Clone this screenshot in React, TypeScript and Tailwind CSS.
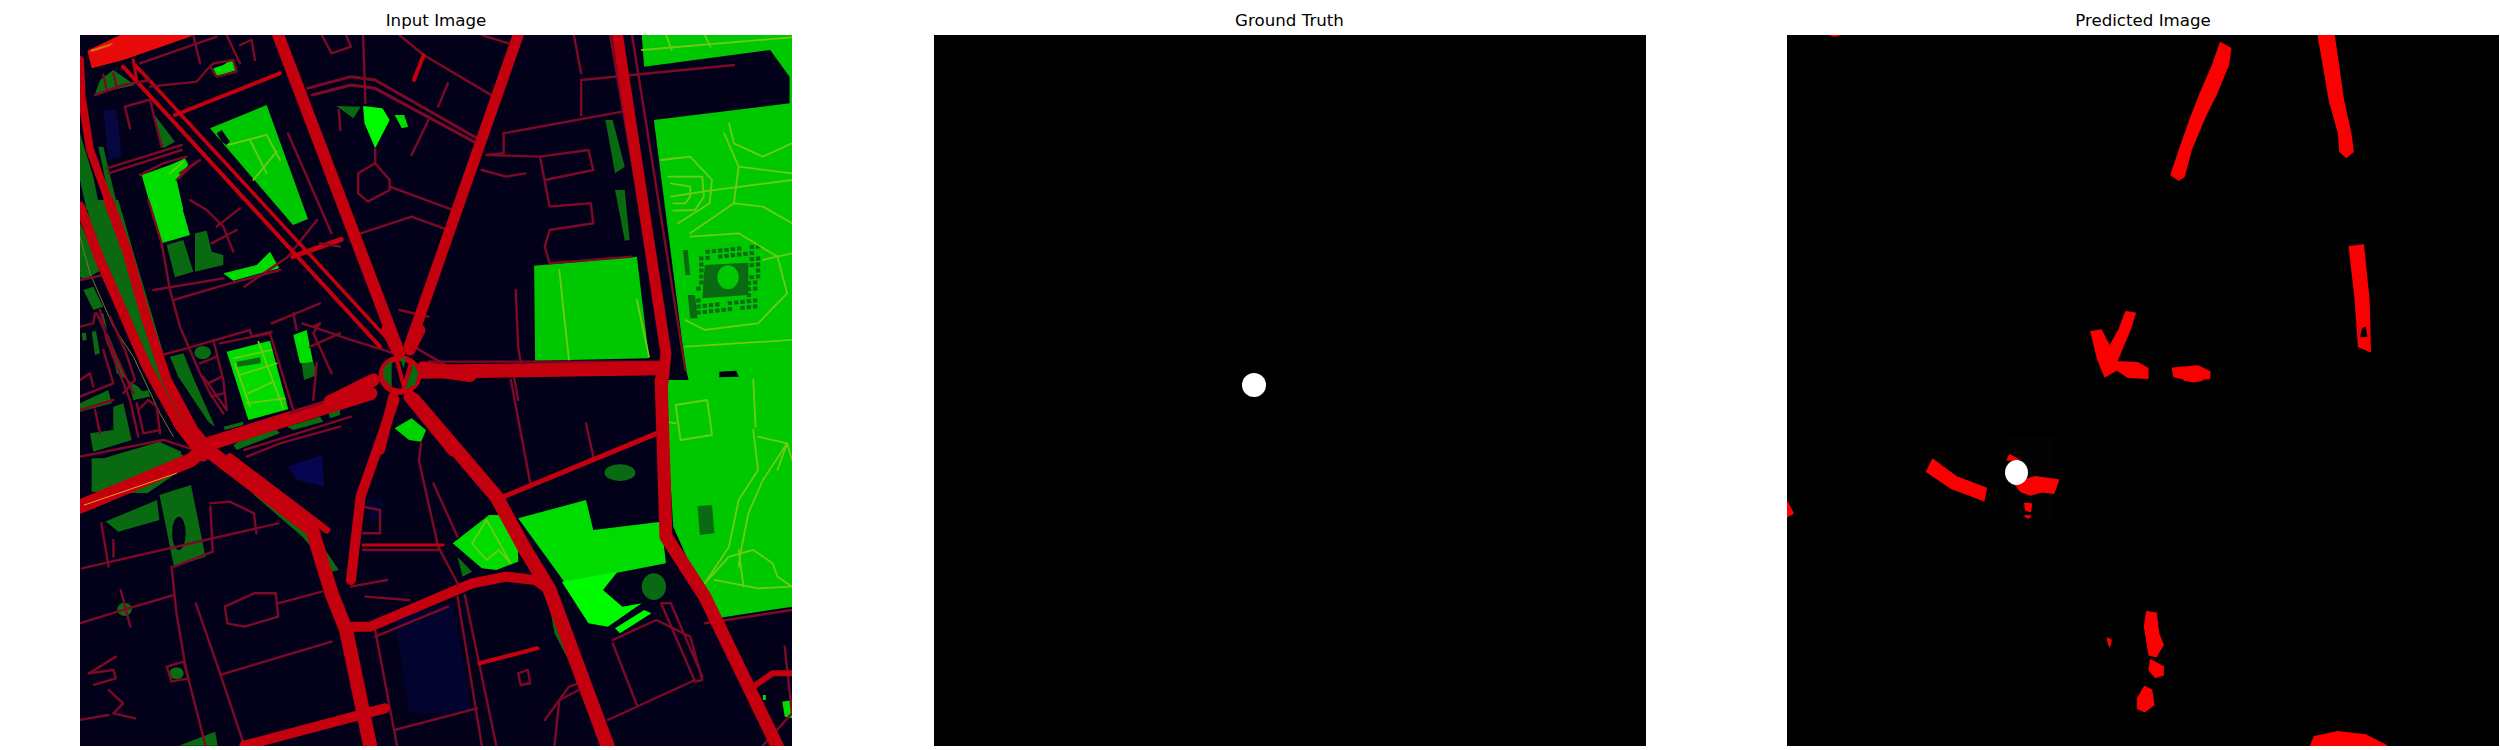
import React from 'react';

type Shape = { c: string; p: string };
type Line = { c: string; w: number; p: string };
type Blob = { c: string; x: number; y: number; rx: number; ry: number };
type Layer = { matrix: string; fills: Shape[]; blobs?: Blob[]; lines: Line[] };

const DARK = '#0a6a12';
const MID = '#00c800';
const LIGHT = '#00dc00';
const NEON = '#00fa00';
const ROAD = '#c4000f';
const THIN = '#7c0a26';
const PATH = '#6ccc14';
const GROUND = '#03001a';

const thin = (...items: string[]): Line[] => items.map((p) => ({ c: THIN, w: 2.4, p }));
const path = (...items: string[]): Line[] => items.map((p) => ({ c: PATH, w: 1.8, p }));

// little dark plots around the square in the park
const plots: Shape[] = [];
for (let row = 0; row < 11; row++) {
  for (let col = 0; col < 10; col++) {
    const inner = row > 1 && row < 9 && col > 0 && col < 8;
    if (inner || (row + col * 3) % 7 === 0) continue;
    const x = 1318 + col * 13 + (row > 5 ? -6 : 0);
    const y = 752 + row * 18 + col * -2;
    plots.push({ c: DARK, p: `${x},${y} ${x + 9},${y - 1} ${x + 10},${y + 11} ${x + 1},${y + 12}` });
  }
}

// coordinates of the upper crop of the map
const upperMap: Layer = {
  matrix: 'matrix(0.4847 0 0 0.3333 -19.9 -35)',
  fills: [
    { c: MID, p: '1200,105 1510,105 1510,1200 1250,1200 1255,1165 1300,1160 1290,1100 1225,360 1505,310 1505,230 1465,150 1205,200' },
    { c: GROUND, p: '1360,1115 1395,1112 1400,1130 1360,1132' },
    { c: NEON, p: '625,318 665,325 680,360 650,445 628,370' },
    { c: LIGHT, p: '690,345 710,345 718,380 705,385' },
    { c: DARK, p: '570,318 620,320 605,355' },
    { c: MID, p: '978,797 1190,770 1215,1075 980,1082' },
    { c: DARK, p: '1125,360 1140,360 1165,500 1145,520' },
    { c: DARK, p: '1145,570 1165,570 1175,720 1165,722' },
    { c: DARK, p: '1285,750 1295,750 1300,825 1290,825' },
    { c: DARK, p: '1295,885 1310,885 1315,955 1300,955' },
    { c: DARK, p: '1330,795 1420,788 1420,885 1325,895' },
    ...plots,
  ],
  blobs: [{ c: MID, x: 1378, y: 832, rx: 22, ry: 36 }],
  lines: [
    ...path(
      '1200,150 1510,112',
      '1250,105 1262,150',
      '1330,105 1342,140',
      '1240,480 1300,470 1345,540 1340,610 1275,670',
      '1255,530 1325,530 1328,590 1310,630 1265,632',
      '1260,550 1300,560 1300,590 1290,610 1265,610',
      '1260,590 1340,572 1510,540',
      '1510,430 1450,470 1390,430 1380,370',
      '1400,500 1510,520',
      '1370,400 1400,500 1390,610 1340,660 1300,700',
      '1390,610 1450,620 1510,670',
      '1300,710 1400,700 1480,770 1500,880 1440,970 1330,990 1290,960',
      '1450,780 1510,760',
      '1290,1040 1510,1020',
      '1030,810 1040,950 1050,1080',
      '1190,900 1215,1070',
    ),
    ...thin(
      '730,240 750,165',
      '700,105 750,165 895,290',
      '540,105 560,160 600,140 590,105',
      '800,250 780,320',
      '870,105 925,130',
      '625,105 630,310',
      '650,445 650,490 615,520 615,580 635,605 680,570 680,540 650,490',
      '680,560 810,630',
      '575,330 578,390',
      '760,360 725,465',
      '915,400 1160,335',
      '915,400 915,460 880,465',
      '870,510 920,530 960,520',
      '880,465 990,470 1090,450 1100,510 1000,540',
      '990,470 1010,620 1095,610 1100,670 1010,690 1000,740 1010,790 1180,770',
      '1075,240 1075,345',
      '1075,240 1390,195',
      '1060,105 1075,220',
      '940,870 945,1040 950,1085',
      '760,1085 1250,1085',
      '620,700 725,650 800,690',
      '470,400 560,700',
      '530,660 470,770 380,860',
      '500,970 600,1020 690,1060',
      '700,930 760,950',
      '730,1040 800,1100',
      '935,1120 945,1200',
      '1135,105 1240,1000',
      '1180,105 1290,1110',
    ),
    { c: THIN, w: 3, p: '510,265 600,230 650,240 860,415' },
    { c: THIN, w: 3, p: '520,285 600,255 650,265 860,430' },
    { c: ROAD, w: 4, p: '730,240 750,165' },
    { c: ROAD, w: 5, p: '480,770 580,718' },
    { c: ROAD, w: 4, p: '130,200 660,1040' },
    { c: ROAD, w: 3.5, p: '155,195 690,1040' },
    { c: ROAD, w: 12, p: '450,105 700,1060' },
    { c: ROAD, w: 11, p: '945,105 720,1040' },
    { c: ROAD, w: 11, p: '1150,105 1250,1060 1240,1200' },
    { c: ROAD, w: 14, p: '745,1115 1235,1105' },
  ],
};

// coordinates of the lower crop of the map
const lowerMap: Layer = {
  matrix: 'matrix(0.4847 0 0 0.3333 -19.9 345)',
  fills: [
    { c: '#050550', p: '470,260 540,225 545,320 490,300' },
    { c: '#030330', p: '690,710 810,670 850,1000 720,1000' },
    { c: '#030330', p: '630,360 665,350 665,420 640,420' },
    { c: MID, p: '1250,0 1510,0 1510,680 1355,715 1320,620 1265,440 1255,200' },
    { c: DARK, p: '65,235 90,235 205,185 250,215 240,280 180,340 65,335' },
    { c: DARK, p: '85,430 200,360 205,420 120,455 95,425' },
    { c: DARK, p: '205,345 270,315 300,530 235,560' },
    { c: DARK, p: '400,320 520,450 575,570 560,575 500,470 400,345' },
    { c: DARK, p: '1010,680 1060,800 1130,1090 1115,1090 1070,900 1020,760' },
    { c: DARK, p: '820,530 850,575 830,590' },
    { c: DARK, p: '245,1097 320,1055 325,1097' },
    { c: DARK, p: '1315,378 1345,375 1350,460 1320,465' },
    { c: '#00d400', p: '690,145 725,115 755,150 745,185 720,180' },
    { c: LIGHT, p: '810,490 885,405 915,405 945,500 945,545 900,570 870,565' },
    { c: LIGHT, p: '945,415 1085,360 1100,450 1240,425 1250,550 1160,575 1040,605' },
    { c: NEON, p: '1035,605 1150,575 1120,630 1160,680 1200,670 1130,740 1090,730' },
    { c: NEON, p: '1145,745 1205,690 1220,700 1155,760' },
    { c: '#d88a10', p: '510,430 525,430 540,490 530,490' },
    { c: LIGHT, p: '1450,945 1456,945 1456,960 1450,960' },
    { c: LIGHT, p: '1490,965 1510,960 1510,1015 1495,1010' },
  ],
  blobs: [
    { c: DARK, x: 1155, y: 278, rx: 32, ry: 25 },
    { c: DARK, x: 1225, y: 620, rx: 25, ry: 40 },
    { c: DARK, x: 133, y: 688, rx: 15, ry: 20 },
    { c: DARK, x: 240, y: 880, rx: 15, ry: 18 },
    { c: GROUND, x: 245, y: 460, rx: 14, ry: 50 },
  ],
  lines: [
    ...path(
      '1270,75 1335,60 1345,165 1280,180 1270,75',
      '1430,150 1440,270 1400,360 1380,500 1330,610',
      '1500,190 1450,300 1420,400 1405,510 1400,560',
      '1440,170 1500,190 1510,240',
      '1500,190 1480,270',
      '1330,610 1380,530 1430,510 1470,550 1480,590 1510,620 1440,625 1350,600',
      '1400,510 1410,620',
      '1250,125 1270,130',
      '1430,0 1435,140',
      '850,490 880,420 930,550 905,510 880,540 850,490',
    ),
    ...thin(
      '930,0 970,310',
      '1085,130 1100,230',
      '745,190 740,240 780,500 820,610',
      '770,310 820,470',
      '625,380 660,390 660,460 625,460',
      '625,510 780,510',
      '600,620 675,600',
      '630,650 720,660',
      '380,210 600,110',
      '45,565 300,480 450,430',
      '230,560 240,700 260,870 300,1097',
      '280,670 330,880 380,1097',
      '340,680 400,640 445,640 450,710 380,740 345,730 340,680',
      '450,670 540,635',
      '40,730 130,690 235,645',
      '125,630 145,740',
      '330,885 560,785',
      '60,880 115,830',
      '60,880 110,870 115,895 70,915',
      '100,930 130,970 110,1000 155,1015',
      '40,1020 100,1005',
      '220,860 255,845 265,895 230,905 220,860',
      '110,480 110,530',
      '85,430 100,560',
      '310,370 350,365 400,400 405,460',
      '310,380 315,515 235,560',
      '820,650 870,1097',
      '835,645 900,1097',
      '650,770 800,680',
      '650,750 695,1097',
      '690,1050 860,985',
      '1140,780 1230,720 1300,770 1325,900 1310,905 1240,670 1260,670 1325,890',
      '1140,790 1190,975',
      '1130,1020 1310,900',
      '1000,1020 1050,920 1080,905',
      '1020,1097 1030,960 1070,930',
      '1330,730 1510,690',
      '1450,1097 1510,1000 1495,800',
      '945,880 965,870 970,910 950,915 945,880',
    ),
    { c: ROAD, w: 3, p: '625,495 790,495' },
    { c: ROAD, w: 4, p: '865,850 985,805' },
    { c: ROAD, w: 5, p: '915,350 1240,155' },
    { c: ROAD, w: 10, p: '380,1097 670,985' },
    { c: ROAD, w: 7, p: '350,230 550,450' },
    { c: ROAD, w: 6, p: '1420,930 1470,880 1510,880' },
    { c: ROAD, w: 14, p: '640,40 310,190 270,240 41,380' },
    { c: ROAD, w: 14, p: '300,205 520,450 560,640 590,750 640,1100' },
    { c: ROAD, w: 10, p: '690,60 620,350 600,600' },
    { c: ROAD, w: 14, p: '730,60 900,350 960,510 1010,630 1130,1100' },
    { c: ROAD, w: 10, p: '600,740 640,740 850,610 920,590 980,600 1010,630' },
    { c: ROAD, w: 13, p: '1240,0 1250,470 1330,650 1480,1100' },
    { c: '#e8a020', w: 1, p: '50,375 240,280' },
  ],
};

// top left corner of the map, at 3x
const cornerMap: Layer = {
  matrix: 'matrix(0.3333 0 0 0.3333 0 -5)',
  fills: [
    { c: '#e80a0a', p: '22,62 120,15 345,15 130,90 35,115' },
    { c: '#d87010', p: '30,60 100,38 90,48 35,66' },
    { c: '#060640', p: '70,240 110,240 125,380 85,390' },
    { c: DARK, p: '45,192 60,150 100,120 165,165' },
    { c: DARK, p: '220,250 285,335 250,355' },
    { c: DARK, p: '0,310 40,440 60,540 20,540 0,450' },
    { c: DARK, p: '55,350 70,350 115,540 95,540' },
    { c: LIGHT, p: '185,435 270,405 315,385 325,405 290,450 310,540 215,540' },
    { c: LIGHT, p: '400,115 430,105 455,88 468,120 410,140' },
    { c: MID, p: '390,295 560,225 684,567 639,585' },
    { c: GROUND, p: '410,310 425,300 450,335 440,345 425,335' },
  ],
  lines: [
    ...path('445,345 560,315 600,390', '520,450 590,365', '270,430 310,395', '510,330 560,430'),
    ...thin(
      '45,195 130,165 210,150',
      '210,170 350,155 380,120 400,100 460,90 470,125 410,140 390,110',
      '135,230 205,210',
      '135,230 150,295',
      '210,210 245,350',
      '80,415 305,345',
      '85,430 305,360',
      '180,435 250,400 320,380',
      '290,450 350,395',
      '300,430 360,390',
      '440,15 480,100',
      '480,45 515,30 525,90',
      '180,100 410,20',
      '340,15 360,100',
      '70,135 80,180',
      '100,130 110,170',
    ),
    { c: ROAD, w: 3, p: '160,90 170,150' },
    { c: ROAD, w: 4, p: '285,255 600,130' },
    { c: ROAD, w: 8, p: '0,90 5,200 30,360 85,510' },
  ],
};

// left side of the map, at 3x
const leftMap: Layer = {
  matrix: 'matrix(0.3333 0 0 0.3333 0 165)',
  fills: [
    { c: LIGHT, p: '205,0 300,0 330,105 245,130' },
    { c: DARK, p: '260,135 310,120 340,215 285,232' },
    { c: DARK, p: '345,100 380,92 395,155 430,165 430,195 345,215' },
    { c: LIGHT, p: '430,220 530,195 570,155 598,205 460,242' },
    { c: LIGHT, p: '440,455 570,422 625,628 505,660' },
    { c: LIGHT, p: '640,405 680,390 700,490 660,490' },
    { c: DARK, p: '665,490 700,485 712,525 672,540' },
    { c: DARK, p: '270,470 310,460 345,545 405,680 385,665 295,530' },
    { c: DARK, p: '15,0 85,0 140,150 200,360 250,510 330,680 300,680 200,500 130,340 60,180' },
    { c: DARK, p: '100,0 115,0 170,190 250,460 235,460 160,220' },
    { c: DARK, p: '0,70 65,210 10,240 0,230' },
    { c: DARK, p: '10,270 40,260 70,320 40,330' },
    { c: DARK, p: '60,340 70,340 110,520 175,560 200,590 160,600 155,580 100,440' },
    { c: DARK, p: '0,610 85,570 95,610 0,635' },
    { c: DARK, p: '100,620 130,610 155,720 40,755 30,700 100,690' },
    { c: DARK, p: '155,580 205,570 210,590 160,600' },
    { c: DARK, p: '100,780 230,730 310,765 290,780' },
    { c: DARK, p: '430,680 490,665 490,675 435,690' },
    { c: DARK, p: '460,735 520,700 590,690 600,700 470,750' },
    { c: DARK, p: '620,680 720,650 730,665 640,690' },
    { c: DARK, p: '745,640 780,625 780,645 750,655' },
    { c: DARK, p: '470,485 540,472 542,490 472,500' },
    { c: DARK, p: '5,400 18,398 20,420 8,422' },
    { c: DARK, p: '35,395 48,393 60,460 45,465' },
  ],
  blobs: [{ c: DARK, x: 368, y: 458, rx: 25, ry: 20 }],
  lines: [
    ...path(
      '460,475 575,450',
      '480,525 590,490',
      '500,610 615,595',
      '505,580 580,545',
      '535,425 610,625',
      '465,490 510,620',
    ),
    { c: '#6a8020', w: 1, p: '0,110 30,220 100,380 160,470 240,640 280,710' },
    ...thin(
      '205,0 245,130 270,270 300,380 330,450 360,520 390,580 430,640',
      '220,270 430,235',
      '280,300 450,250 600,210',
      '245,465 320,445 510,390 515,410 575,395',
      '330,0 380,30 430,80 460,155',
      '410,80 480,25',
      '395,130 470,90',
      '420,430 570,400 640,630',
      '400,420 430,540 440,630 370,530',
      '360,490 410,470',
      '575,370 720,310',
      '640,340 650,390',
      '700,380 720,370 700,400 755,520',
      '690,440 780,400',
      '395,590 430,580',
      '385,550 425,530',
      '710,490 700,600',
      '630,640 780,590',
      '0,240 70,225',
      '50,340 100,450 160,580',
      '90,350 135,450 165,540 130,580',
      '60,330 80,420 150,600 175,710',
      '0,380 40,370 45,340',
      '0,540 30,520 40,560',
      '0,590 100,550 70,450',
      '0,630 100,600',
      '45,630 60,700',
      '170,610 190,700 240,690',
      '175,630 205,600 230,620 240,700',
      '0,770 250,720 330,745',
      '500,770 600,730 780,680',
      '720,130 780,140',
    ),
    { c: ROAD, w: 10, p: '0,20 60,180 130,340 200,500 300,680 370,770' },
    { c: ROAD, w: 10, p: '85,0 140,150 200,360 260,540 340,690 390,750' },
  ],
};

const hub = 'matrix(0.3333 0 0 0.3333 250 295)';
const hubMap: Layer = {
  matrix: hub,
  fills: [],
  lines: [
    { c: ROAD, w: 11, p: '170,0 200,60' },
    { c: ROAD, w: 11, p: '270,0 240,60' },
    { c: ROAD, w: 14, p: '280,115 420,135' },
    { c: ROAD, w: 13, p: '130,150 0,215' },
    { c: ROAD, w: 10, p: '190,200 150,360' },
    { c: ROAD, w: 13, p: '240,200 370,360' },
  ],
};

const layers = [upperMap, lowerMap, cornerMap, leftMap, hubMap];

const MapFills = ({ layer }: { layer: Layer }) => (
  <g transform={layer.matrix}>
    {layer.fills.map((s, i) => (
      <polygon key={i} points={s.p} fill={s.c} />
    ))}
    {layer.blobs?.map((b, i) => (
      <ellipse key={i} cx={b.x} cy={b.y} rx={b.rx} ry={b.ry} fill={b.c} />
    ))}
  </g>
);

const MapLines = ({ layer }: { layer: Layer }) => (
  <g transform={layer.matrix}>
    {layer.lines.map((l, i) => (
      <polyline
        key={i}
        points={l.p}
        fill="none"
        stroke={l.c}
        strokeWidth={l.w}
        strokeLinejoin="round"
        strokeLinecap="round"
        vectorEffect="non-scaling-stroke"
      />
    ))}
  </g>
);

const InputPanel = () => (
  <svg viewBox="0 0 712 711" className="block w-[712px] h-[711px] bg-[#03001a]">
    {layers.map((layer, i) => (
      <MapFills key={i} layer={layer} />
    ))}
    {layers.map((layer, i) => (
      <MapLines key={i} layer={layer} />
    ))}
    <g transform={hub}>
      <ellipse cx={210} cy={135} rx={55} ry={50} fill={GROUND} stroke={ROAD} strokeWidth={6} vectorEffect="non-scaling-stroke" />
      <polygon points="185,90 185,172 160,145 160,115" fill={DARK} />
      <polygon points="225,178 250,100 265,130 255,165" fill={DARK} />
      <polygon points="210,85 228,85 220,115" fill={DARK} />
      <polyline points="200,88 222,172 245,92" fill="none" stroke={ROAD} strokeWidth={4} vectorEffect="non-scaling-stroke" />
    </g>
  </svg>
);

const TruthPanel = () => (
  <svg viewBox="0 0 712 711" className="block w-[712px] h-[711px] bg-black">
    <ellipse cx={320} cy={350} rx={12} ry={12} fill="#fff" />
  </svg>
);

const upperPredicted = [
  '968,128 990,145 985,195 960,280 935,350 905,450 890,530 878,540 862,525 880,450 905,350 925,280 950,200',
  '1178,105 1190,200 1202,300 1222,400 1225,455 1238,472 1253,455 1248,400 1232,300 1222,200 1212,105',
  '1245,740 1258,900 1265,1040 1290,1055 1287,900 1275,735',
  '690,995 712,990 730,1040 750,990 765,935 785,940 775,985 745,1085 790,1088 812,1105 812,1135 770,1132 745,1110 720,1130 705,1080',
  '865,1105 920,1098 945,1115 945,1135 900,1140 868,1130',
  '130,105 150,105 140,108',
];

const lowerPredicted = [
  '350,238 400,290 465,325 460,362 390,325 337,275',
  '515,225 535,240 510,240',
  '525,310 570,290 620,300 610,340 585,335 560,345 540,335',
  '548,370 562,372 560,395 550,390',
  '548,408 560,408 556,414',
  '37,365 50,400 37,410',
  '810,695 830,700 835,760 845,795 830,830 815,825 805,740',
  '818,840 845,860 845,885 828,892 815,870',
  '805,920 820,930 825,975 805,995 790,985 790,955',
  '1162,1097 1170,1070 1220,1055 1280,1065 1325,1097',
  '725,775 733,780 730,800',
  '890,0 930,0 910,5',
];

const PredictedPanel = () => (
  <svg viewBox="0 0 712 711" className="block w-[712px] h-[711px] bg-black">
    <rect x={222} y={402} width={44} height={83} fill="#030303" />
    <g transform="matrix(0.4655 0 0 0.3333 -17.2 -35)" fill="#fa0000" stroke="#fa0000" strokeWidth={1.5} strokeLinejoin="round">
      {upperPredicted.map((p, i) => (
        <polygon key={i} points={p} vectorEffect="non-scaling-stroke" />
      ))}
      <polygon points="1272,985 1280,980 1284,1010 1268,1012" fill="#000" stroke="none" />
    </g>
    <g transform="matrix(0.4655 0 0 0.3333 -17.2 345)" fill="#fa0000" stroke="#fa0000" strokeWidth={1.5} strokeLinejoin="round">
      {lowerPredicted.map((p, i) => (
        <polygon key={i} points={p} vectorEffect="non-scaling-stroke" />
      ))}
    </g>
    <ellipse cx={229.5} cy={437.5} rx={11.5} ry={12.5} fill="#fff" />
  </svg>
);

const panels = [
  { title: 'Input Image', body: <InputPanel /> },
  { title: 'Ground Truth', body: <TruthPanel /> },
  { title: 'Predicted Image', body: <PredictedPanel /> },
];

export default function App() {
  return (
    <div className="w-[2500px] h-[750px] bg-white overflow-hidden flex pl-[80px] gap-[141.5px] font-['DejaVu_Sans',sans-serif]">
      {panels.map((panel) => (
        <figure key={panel.title} className="w-[712px] flex flex-col">
          <figcaption className="h-[35px] pt-[11px] text-center text-[16.67px] leading-[20px] text-black">{panel.title}</figcaption>
          {panel.body}
        </figure>
      ))}
    </div>
  );
}
